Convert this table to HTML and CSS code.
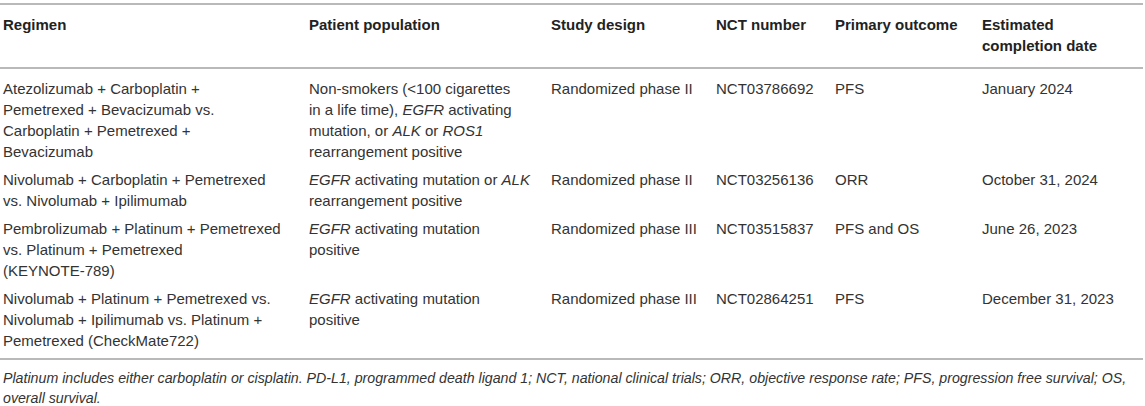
FILE: index.html
```html
<!DOCTYPE html>
<html lang="en">
<head>
    <meta charset="UTF-8">
    <meta name="viewport" content="width=device-width, initial-scale=1.0">
    <title>Ongoing trials</title>
    <link rel="stylesheet" href="styles.css">
</head>
<body>
    <div class="wrap">
        <table class="trials">
            <colgroup>
                <col class="c-regimen">
                <col class="c-pop">
                <col class="c-design">
                <col class="c-nct">
                <col class="c-outcome">
                <col class="c-date">
            </colgroup>
            <thead>
                <tr>
                    <th>Regimen</th>
                    <th>Patient population</th>
                    <th>Study design</th>
                    <th>NCT number</th>
                    <th>Primary outcome</th>
                    <th>Estimated<br>completion date</th>
                </tr>
            </thead>
            <tbody>
                <tr>
                    <td>Atezolizumab + Carboplatin +<br>Pemetrexed + Bevacizumab vs.<br>Carboplatin + Pemetrexed +<br>Bevacizumab</td>
                    <td>Non-smokers (&lt;100 cigarettes<br>in a life time), <i>EGFR</i> activating<br>mutation, or <i>ALK</i> or <i>ROS1</i><br>rearrangement positive</td>
                    <td>Randomized phase II</td>
                    <td>NCT03786692</td>
                    <td>PFS</td>
                    <td>January 2024</td>
                </tr>
                <tr>
                    <td>Nivolumab + Carboplatin + Pemetrexed<br>vs. Nivolumab + Ipilimumab</td>
                    <td><i>EGFR</i> activating mutation or <i>ALK</i><br>rearrangement positive</td>
                    <td>Randomized phase II</td>
                    <td>NCT03256136</td>
                    <td>ORR</td>
                    <td>October 31, 2024</td>
                </tr>
                <tr>
                    <td>Pembrolizumab + Platinum + Pemetrexed<br>vs. Platinum + Pemetrexed<br>(KEYNOTE-789)</td>
                    <td><i>EGFR</i> activating mutation<br>positive</td>
                    <td>Randomized phase III</td>
                    <td>NCT03515837</td>
                    <td>PFS and OS</td>
                    <td>June 26, 2023</td>
                </tr>
                <tr>
                    <td>Nivolumab + Platinum + Pemetrexed vs.<br>Nivolumab + Ipilimumab vs. Platinum +<br>Pemetrexed (CheckMate722)</td>
                    <td><i>EGFR</i> activating mutation<br>positive</td>
                    <td>Randomized phase III</td>
                    <td>NCT02864251</td>
                    <td>PFS</td>
                    <td>December 31, 2023</td>
                </tr>
            </tbody>
        </table>
        <p class="note">Platinum includes either carboplatin or cisplatin. PD-L1, programmed death ligand 1; NCT, national clinical trials; ORR, objective response rate; PFS, progression free survival; OS, overall survival.</p>
    </div>
</body>
</html>
```

FILE: styles.css
```css
body {
    margin: 0;
    background: #fff;
    font-family: "Liberation Sans", Arial, sans-serif;
    color: #333;
}

.wrap {
    width: 1143px;
    padding-top: 3px;
}

.trials {
    width: 100%;
    border-collapse: collapse;
    table-layout: fixed;
    font-size: 15px;
    line-height: 21px;
    border-top: 2px solid #b9b9b9;
    border-bottom: 2px solid #b9b9b9;
}

.c-regimen { width: 306px; }
.c-pop { width: 242px; }
.c-design { width: 165px; }
.c-nct { width: 119px; }
.c-outcome { width: 147px; }

.trials th {
    text-align: left;
    vertical-align: top;
    font-weight: bold;
    color: #222;
    padding: 9px 4px 11px 3px;
    border-bottom: 2px solid #b9b9b9;
}

.trials td {
    vertical-align: top;
    white-space: nowrap;
    padding: 3px 4px 4px 3px;
}

.trials tbody tr:first-child td {
    padding-top: 9px;
}

.trials tbody tr:last-child td {
    padding-bottom: 7px;
}

.note {
    margin: 0;
    padding: 8px 3px 0;
    font-size: 14.2px;
    line-height: 20px;
    font-style: italic;
    color: #333;
}
```
